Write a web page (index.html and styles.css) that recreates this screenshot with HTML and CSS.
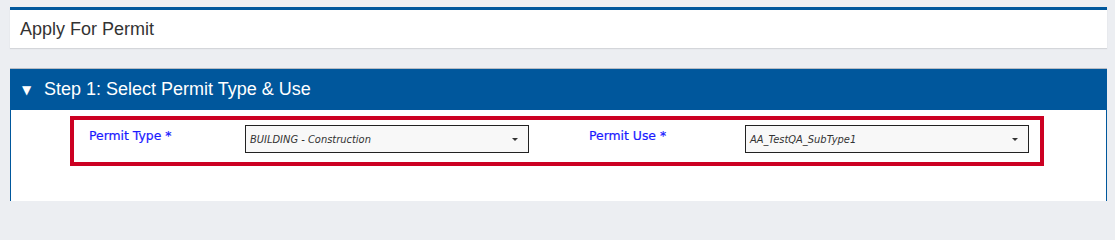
FILE: index.html
```html
<!DOCTYPE html>
<html>
<head>
<meta charset="utf-8">
<link rel="stylesheet" href="styles.css">
</head>
<body>
<div class="page">
  <div class="title-card">
    <h1 class="title">Apply For Permit</h1>
  </div>
  <div class="panel">
    <div class="panel-head">
      <span class="caret">&#9660;</span>
      <span class="panel-title">Step 1: Select Permit Type &amp; Use</span>
    </div>
    <div class="panel-body">
      <div class="highlight">
        <div class="field">
          <label class="label">Permit Type *</label>
          <div class="select">
            <span class="select-text">BUILDING - Construction</span>
            <span class="select-arrow"></span>
          </div>
        </div>
        <div class="field">
          <label class="label">Permit Use *</label>
          <div class="select">
            <span class="select-text">AA_TestQA_SubType1</span>
            <span class="select-arrow"></span>
          </div>
        </div>
      </div>
    </div>
  </div>
</div>
</body>
</html>
```
FILE: styles.css
```css
html, body {
  margin: 0;
  padding: 0;
  background: #eceef2;
  font-family: "Liberation Sans", Arial, sans-serif;
  height: 201px;
  overflow: hidden;
}
.page {
  padding: 7px 8px 0 10px;
  width: 1097px;
}
.title-card {
  background: #fff;
  border-top: 3px solid #00579c;
  height: 38px;
  box-shadow: 0 1px 1px #d4d6da;
  display: flex;
  align-items: center;
  padding-left: 10px;
}
.title {
  margin: 0;
  font-weight: normal;
  font-size: 18px;
  color: #333;
}
.panel {
  margin-top: 20px;
  border-top: 1px solid #b8bcc4;
}
.panel-head {
  background: #00579c;
  height: 41px;
  display: flex;
  align-items: center;
  padding-left: 12px;
  color: #fff;
}
.caret {
  font-size: 12px;
  width: 22px;
  font-family: "DejaVu Sans", sans-serif;
}
.panel-title {
  font-size: 18px;
}
.panel-body {
  background: #fff;
  border-left: 1px solid #00579c;
  border-right: 1px solid #00579c;
  height: 92px;
  padding: 6px 0 0 59px;
  box-sizing: border-box;
}
.highlight {
  box-sizing: border-box;
  width: 974px;
  height: 50px;
  border: 4px solid #cc0022;
  display: flex;
  padding-left: 15px;
}
.field {
  display: flex;
  align-items: flex-start;
  width: 500px;
  flex-shrink: 0;
}
.label {
  width: 156px;
  flex-shrink: 0;
  padding-top: 8px;
  font-family: "DejaVu Sans", Tahoma, sans-serif;
  font-size: 12.4px;
  color: #1a1aff;
  -webkit-text-stroke: 0.2px #1a1aff;
}
.select {
  box-sizing: border-box;
  margin-top: 5px;
  width: 284px;
  height: 28px;
  border: 1px solid #222;
  background: #f8f8f8;
  display: flex;
  align-items: center;
  justify-content: space-between;
  padding: 0 10px 0 4px;
  flex-shrink: 0;
}
.select-text {
  font-family: "DejaVu Sans Condensed", "DejaVu Sans", sans-serif;
  font-style: italic;
  font-size: 11px;
  color: #333;
}
.select-arrow {
  width: 0;
  height: 0;
  border-left: 3px solid transparent;
  border-right: 3px solid transparent;
  border-top: 3px solid #333;
}
```
